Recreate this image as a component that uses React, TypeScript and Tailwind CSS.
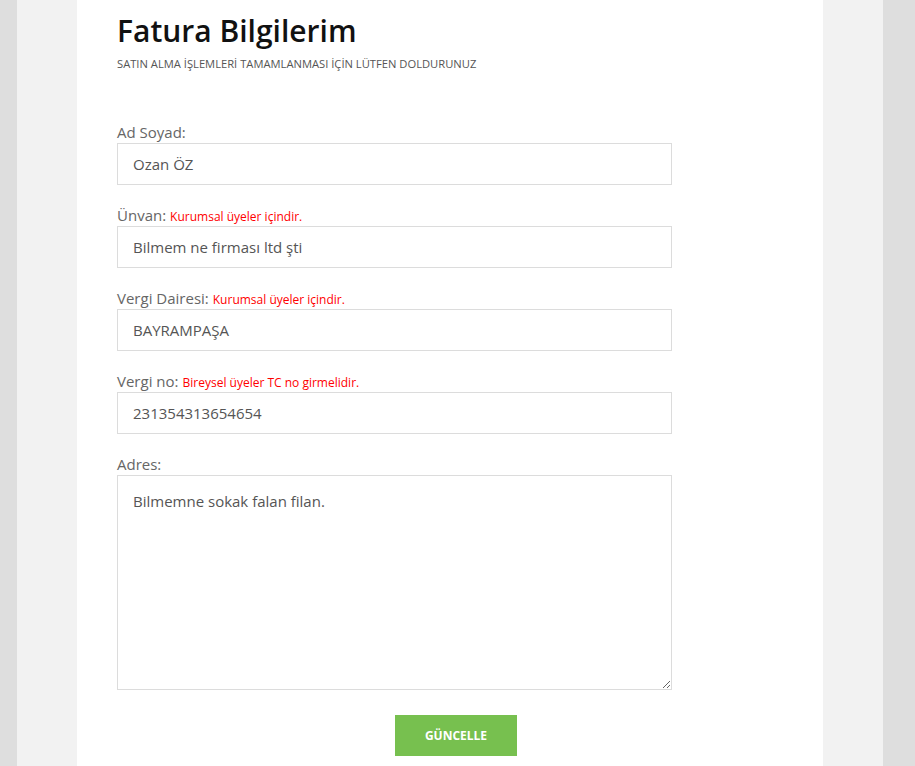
import React from "react";

interface FieldProp {
  label: string;
  note?: string;
  value: string;
}

const Field = ({ label, note, value }: FieldProp) => {
  return (
    <div className="mb-[19px]">
      <div className="h-[22px] leading-[22px] text-[15px] text-[#666]">
        {label}
        {note ? (
          <span className="ml-[4px] text-[12px] leading-none text-[#ff0000]">{note}</span>
        ) : null}
      </div>
      <input
        defaultValue={value}
        className="block w-[555px] h-[42px] border border-[#dcdcdc] bg-white px-[15px] text-[15px] text-[#555] outline-none"
      />
    </div>
  );
};

export default function App() {
  return (
    <div
      className="h-screen overflow-hidden bg-[#dedede] pl-[17px] pr-[32px]"
      style={{ fontFamily: '"Open Sans", "Noto Sans", sans-serif' }}
    >
      <div className="h-full bg-[#f2f2f2] px-[60px]">
        <div className="h-full bg-white px-[40px] pt-[13px]">
          <h1 className="text-[30px] leading-[36px] font-semibold text-[#111]">Fatura Bilgilerim</h1>
          <p className="mt-[7px] text-[11.2px] leading-[16px] uppercase text-[#555]">
            SATIN ALMA İŞLEMLERİ TAMAMLANMASI İÇİN LÜTFEN DOLDURUNUZ
          </p>

          <div className="mt-[49px]">
            <Field label="Ad Soyad:" value="Ozan ÖZ" />
            <Field label="Ünvan:" note="Kurumsal üyeler içindir." value="Bilmem ne firması ltd şti" />
            <Field label="Vergi Dairesi:" note="Kurumsal üyeler içindir." value="BAYRAMPAŞA" />
            <Field label="Vergi no:" note="Bireysel üyeler TC no girmelidir." value="231354313654654" />
            <div>
              <div className="h-[22px] leading-[22px] text-[15px] text-[#666]">Adres:</div>
              <textarea
                defaultValue="Bilmemne sokak falan filan."
                className="block w-[555px] h-[215px] border border-[#dcdcdc] bg-white px-[15px] pt-[14px] text-[15px] leading-[22px] text-[#555] outline-none"
              />
            </div>
            <div className="mt-[25px] pl-[278px]">
              <button className="w-[122px] h-[41px] bg-[#77c04f] text-white text-[12px] font-bold">
                GÜNCELLE
              </button>
            </div>
          </div>
        </div>
      </div>
    </div>
  );
}
